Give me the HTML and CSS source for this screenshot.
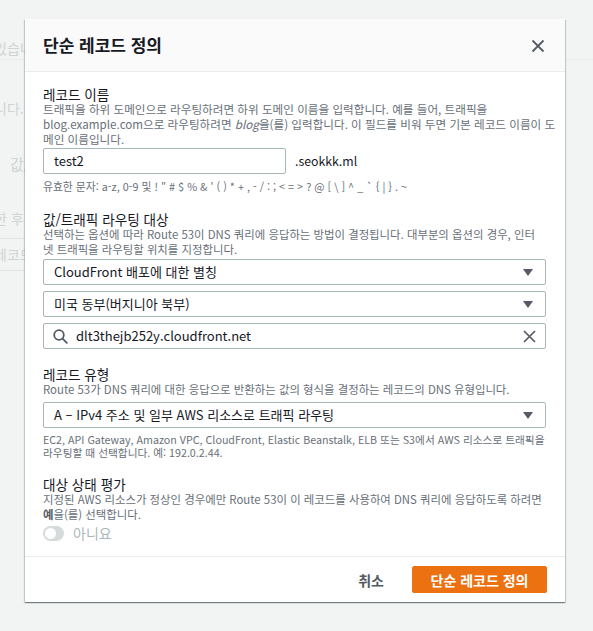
FILE: index.html
```html
<!DOCTYPE html>
<html lang="ko">
<head>
<meta charset="utf-8">
<link rel="stylesheet" href="styles.css">
</head>
<body>
<div class="bg">
  <div class="bg-line bg-l1">있습니다.</div>
  <div class="bg-line bg-l2">니다.</div>
  <div class="bg-line bg-l3">값/트</div>
  <div class="bg-line bg-l4">한 후</div>
  <div class="bg-box">레코드</div>
</div>

<div class="modal">
  <div class="modal-header">
    <h2 class="modal-title">단순 레코드 정의</h2>
    <span class="close">
      <svg width="14" height="14" viewBox="0 0 14 14"><path d="M1.5 1.5 L12.5 12.5 M12.5 1.5 L1.5 12.5" stroke="#545b64" stroke-width="1.8" fill="none"/></svg>
    </span>
  </div>

  <div class="modal-body">
    <div class="field">
      <div class="label">레코드 이름</div>
      <div class="desc desc-first">트래픽을 하위 도메인으로 라우팅하려면 하위 도메인 이름을 입력합니다. 예를 들어, 트래픽을<br>blog.example.com으로 라우팅하려면 <i>blog</i>을(를) 입력합니다. 이 필드를 비워 두면 기본 레코드 이름이 도<br>메인 이름입니다.</div>
      <div class="name-row">
        <div class="input name-input">test2</div>
        <span class="suffix">.seokkk.ml</span>
      </div>
      <div class="hint">유효한 문자: a-z, 0-9 및 ! " # $ % &amp; ' ( ) * + , - / : ; &lt; = &gt; ? @ [ \ ] ^ _ ` { | } . ~</div>
    </div>

    <div class="field sec2">
      <div class="label">값/트래픽 라우팅 대상</div>
      <div class="desc">선택하는 옵션에 따라 Route 53이 DNS 쿼리에 응답하는 방법이 결정됩니다. 대부분의 옵션의 경우, 인터<br>넷 트래픽을 라우팅할 위치를 지정합니다.</div>
      <div class="stack">
        <div class="input select"><span>CloudFront 배포에 대한 별칭</span><span class="caret"></span></div>
        <div class="input select"><span>미국 동부(버지니아 북부)</span><span class="caret"></span></div>
        <div class="input search">
          <svg class="search-icon" width="15" height="15" viewBox="0 0 15 15"><circle cx="6" cy="6" r="4.8" stroke="#545b64" stroke-width="1.8" fill="none"/><path d="M9.6 9.6 L13.8 13.8" stroke="#545b64" stroke-width="1.8" stroke-linecap="round"/></svg>
          <span class="search-text">dlt3thejb252y.cloudfront.net</span>
          <svg class="clear" width="13" height="13" viewBox="0 0 13 13"><path d="M1 1 L12 12 M12 1 L1 12" stroke="#545b64" stroke-width="1.7" fill="none"/></svg>
        </div>
      </div>
    </div>

    <div class="field sec3">
      <div class="label">레코드 유형</div>
      <div class="desc">Route 53가 DNS 쿼리에 대한 응답으로 반환하는 값의 형식을 결정하는 레코드의 DNS 유형입니다.</div>
      <div class="input select type-select"><span>A – IPv4 주소 및 일부 AWS 리소스로 트래픽 라우팅</span><span class="caret"></span></div>
      <div class="help">EC2, API Gateway, Amazon VPC, CloudFront, Elastic Beanstalk, ELB 또는 S3에서 AWS 리소스로 트래픽을<br>라우팅할 때 선택합니다. 예: 192.0.2.44.</div>
    </div>

    <div class="field sec4">
      <div class="label">대상 상태 평가</div>
      <div class="desc">지정된 AWS 리소스가 정상인 경우에만 Route 53이 이 레코드를 사용하여 DNS 쿼리에 응답하도록 하려면<br><b>예</b>을(를) 선택합니다.</div>
      <div class="toggle-row">
        <span class="toggle"><span class="knob"></span></span>
        <span class="toggle-label">아니요</span>
      </div>
    </div>
  </div>

  <div class="modal-footer">
    <button class="btn-link">취소</button>
    <button class="btn-primary">단순 레코드 정의</button>
  </div>
</div>
</body>
</html>
```
FILE: styles.css
```css
* { box-sizing: border-box; }
html, body { margin: 0; padding: 0; }
body {
  width: 593px;
  height: 631px;
  background: #f2f3f3;
  font-family: "Noto Sans CJK KR", "Noto Sans", sans-serif;
  color: #16191f;
  position: relative;
  overflow: hidden;
}

/* faint page behind overlay */
.bg { color: #cfd3d3; font-size: 14px; line-height: 16px; }
.bg-line { white-space: nowrap; margin-left: -6px; overflow: hidden; }
.bg-l1 { padding-top: 40px; height: 60px; border-bottom: 1px solid #e8eaea; }
.bg-l2 { padding-top: 40px; height: 90px; }
.bg-l3 { padding-top: 6px; padding-left: 16px; height: 56px; font-size: 15px; }
.bg-l4 { padding-top: 4px; height: 32px; }
.bg-box { margin-left: -6px; height: 33px; line-height: 31px; width: 60px; border-top: 1px solid #e3e5e5; border-bottom: 1px solid #e3e5e5; white-space: nowrap; overflow: hidden; }

.modal {
  position: absolute;
  top: 19px;
  left: 25px;
  width: 540px;
  background: #fff;
  box-shadow: 0 1px 1px 0 rgba(0,28,36,.35), 1px 1px 1px 0 rgba(0,28,36,.15), -1px 1px 1px 0 rgba(0,28,36,.15);
}

.modal-header {
  height: 53px;
  background: #fafafa;
  border-bottom: 1px solid #eaeded;
  display: flex;
  align-items: center;
  justify-content: space-between;
  padding: 0 20px 0 18px;
}
.modal-title {
  margin: 0;
  font-size: 17px;
  font-weight: 700;
  color: #16191f;
  line-height: 22px;
}
.close { display: flex; width: 14px; height: 14px; margin-top: 1px; }

.modal-body { padding: 14px 19px 15px 18px; }

.label { font-size: 13.6px; line-height: 16px; color: #16191f; }
.desc { font-size: 11.4px; line-height: 15px; color: #687078; white-space: nowrap; }
.desc-first { font-size: 11.6px; }
.desc b { color: #545b64; }

.input {
  height: 26px;
  border: 1px solid #aab7b8;
  border-radius: 2px;
  font-size: 13px;
  line-height: 24px;
  padding: 0 10px;
  color: #16191f;
  background: #fff;
  white-space: nowrap;
}

.name-row { display: flex; align-items: center; margin-top: 1px; gap: 9px; }
.name-input { width: 243px; }
.suffix { font-size: 12.3px; color: #16191f; }
.hint { margin-top: 5px; font-size: 10.8px; line-height: 14px; color: #687078; white-space: nowrap; }

.sec2 { margin-top: 18px; }
.stack { display: flex; flex-direction: column; gap: 6px; margin-top: 2px; }
.select { display: flex; align-items: center; justify-content: space-between; padding-right: 12px; }
.caret {
  width: 0; height: 0;
  border-left: 5px solid transparent;
  border-right: 5px solid transparent;
  border-top: 7px solid #545b64;
}
.search { display: flex; align-items: center; padding-left: 9px; padding-right: 9px; }
.search-icon { flex: none; }
.search-text { flex: 1; margin-left: 8px; }
.clear { flex: none; }

.sec3 { margin-top: 17px; }
.type-select { margin-top: 5px; }
.help { margin-top: 5px; font-size: 10.7px; line-height: 13px; color: #687078; white-space: nowrap; }

.sec4 { margin-top: 17px; }
.toggle-row { display: flex; align-items: center; margin-top: 3px; height: 16px; }
.toggle {
  width: 21px; height: 15px;
  border-radius: 8px;
  background: #d5dbdb;
  position: relative;
  display: inline-block;
}
.knob {
  position: absolute;
  left: 2px; top: 2px;
  width: 11px; height: 11px;
  border-radius: 50%;
  background: #fff;
}
.toggle-label { margin-left: 9px; font-size: 14px; color: #aab7b8; }

.modal-footer {
  border-top: 1px solid #eaeded;
  height: 46px;
  display: flex;
  align-items: center;
  justify-content: flex-end;
  padding: 0 18px;
  gap: 8px;
}
.btn-link, .btn-primary {
  font-family: "Noto Sans CJK KR", "Noto Sans", sans-serif;
  font-size: 14px;
  font-weight: 700;
  height: 27px;
  border-radius: 2px;
  cursor: pointer;
}
.btn-link { background: none; border: none; color: #545b64; padding: 0 20px; }
.btn-primary { background: #ec7211; border: 1px solid #ec7211; color: #fff; width: 135px; padding: 0; }
```
